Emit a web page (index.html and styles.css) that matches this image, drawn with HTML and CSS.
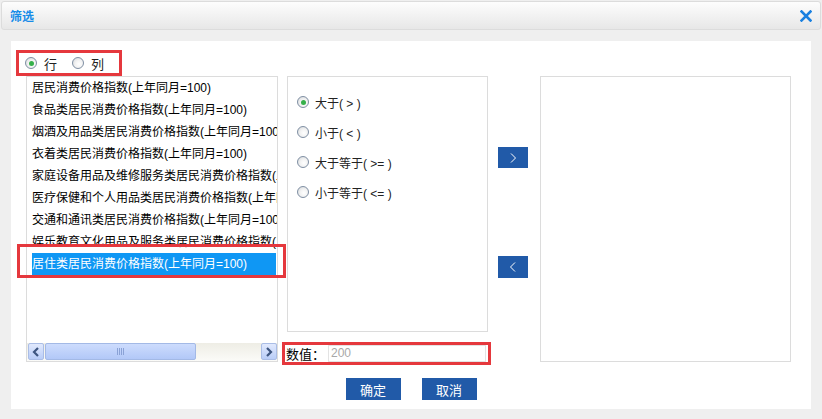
FILE: index.html
```html
<!DOCTYPE html>
<html lang="zh-CN">
<head>
<meta charset="utf-8">
<title>筛选</title>
<link rel="stylesheet" href="styles.css">
</head>
<body>
<div class="dialog">
  <div class="header">
    <span class="title">筛选</span>
    <svg class="close" width="12" height="12" viewBox="0 0 12 12"><path d="M1.5 1.5 L10.5 10.5 M10.5 1.5 L1.5 10.5" stroke="#1a80e0" stroke-width="2.6" stroke-linecap="square"/></svg>
  </div>
  <div class="panel">
    <div class="main">
      <div class="left">
        <div class="axis">
          <label class="opt"><span class="radio on"></span>行</label>
          <label class="opt"><span class="radio"></span>列</label>
        </div>
        <div class="list">
          <div class="items">
            <div class="item">居民消费价格指数(上年同月=100)</div>
            <div class="item">食品类居民消费价格指数(上年同月=100)</div>
            <div class="item">烟酒及用品类居民消费价格指数(上年同月=100)</div>
            <div class="item">衣着类居民消费价格指数(上年同月=100)</div>
            <div class="item">家庭设备用品及维修服务类居民消费价格指数(上年同月=100)</div>
            <div class="item">医疗保健和个人用品类居民消费价格指数(上年同月=100)</div>
            <div class="item">交通和通讯类居民消费价格指数(上年同月=100)</div>
            <div class="item">娱乐教育文化用品及服务类居民消费价格指数(上年同月=100)</div>
            <div class="item sel">居住类居民消费价格指数(上年同月=100)</div>
          </div>
          <div class="hscroll">
            <span class="sbtn"><svg width="8" height="10" viewBox="0 0 8 10"><path d="M6 1 L2 5 L6 9" fill="none" stroke="#3d5580" stroke-width="2.2"/></svg></span>
            <span class="thumb"><span class="grip"></span></span>
            <span class="spacer"></span>
            <span class="sbtn"><svg width="8" height="10" viewBox="0 0 8 10"><path d="M2 1 L6 5 L2 9" fill="none" stroke="#3d5580" stroke-width="2.2"/></svg></span>
          </div>
        </div>
        <div class="mark"></div>
      </div>
      <div class="mid">
        <div class="ops">
          <label class="op"><span class="radio on"></span>大于( &gt; )</label>
          <label class="op"><span class="radio"></span>小于( &lt; )</label>
          <label class="op"><span class="radio"></span>大于等于( &gt;= )</label>
          <label class="op"><span class="radio"></span>小于等于( &lt;= )</label>
        </div>
        <div class="value">
          <span class="vlabel">数值：</span>
          <span class="vinput">200</span>
        </div>
      </div>
      <div class="move">
        <span class="mbtn add"><svg width="8" height="12" viewBox="0 0 8 12"><path d="M2 1.5 L6.5 6 L2 10.5" fill="none" stroke="#fff" stroke-width="1"/></svg></span>
        <span class="mbtn remove"><svg width="8" height="12" viewBox="0 0 8 12"><path d="M6 1.5 L1.5 6 L6 10.5" fill="none" stroke="#fff" stroke-width="1"/></svg></span>
      </div>
      <div class="target"></div>
    </div>
    <div class="footer">
      <span class="btn">确定</span>
      <span class="btn">取消</span>
    </div>
  </div>
</div>
</body>
</html>
```
FILE: styles.css
```css
html, body {
  margin: 0;
  padding: 0;
}
body {
  width: 822px;
  height: 419px;
  overflow: hidden;
  background: #efefef;
  font-family: "Liberation Sans", "Noto Sans CJK SC", sans-serif;
  font-size: 12px;
  color: #000;
}
.dialog {
  padding: 1px 1px 0 1px;
}
.header {
  box-sizing: border-box;
  height: 29px;
  border: 1px solid #dcdcdc;
  border-radius: 3px;
  background: linear-gradient(#fdfdfd, #e7e7e7);
  display: flex;
  align-items: center;
  justify-content: space-between;
  padding: 0 8px 0 8px;
}
.title {
  color: #168be8;
  font-weight: bold;
  font-size: 12px;
}
.close {
  display: block;
  margin-top: 1px;
}
.panel {
  box-sizing: border-box;
  margin: 11px 10px 0 10px;
  height: 368px;
  background: #fff;
}
.main {
  display: flex;
  align-items: flex-start;
  padding: 9px 0 0 5px;
}
.left {
  position: relative;
  width: 266px;
  flex: none;
}
.axis {
  box-sizing: border-box;
  width: 106px;
  height: 26px;
  border: 3px solid #e5383d;
  display: flex;
  align-items: center;
  padding-left: 6px;
  gap: 15px;
}
.opt {
  display: flex;
  align-items: center;
  gap: 7px;
  font-size: 13px;
  color: #222;
}
.radio {
  box-sizing: border-box;
  width: 12px;
  height: 12px;
  border-radius: 50%;
  border: 1px solid #7f8fa3;
  background: radial-gradient(circle at 60% 60%, #ffffff 0%, #f2f2f2 45%, #cfd3d8 100%);
  display: flex;
  align-items: center;
  justify-content: center;
  flex: none;
}
.radio.on::after {
  content: "";
  width: 5px;
  height: 5px;
  border-radius: 50%;
  background: #36b04a;
}
.list {
  box-sizing: border-box;
  margin-left: 10px;
  width: 252px;
  height: 286px;
  border: 1px solid #dcdcdc;
  display: flex;
  flex-direction: column;
}
.items {
  flex: 1;
  overflow: hidden;
  padding-left: 5px;
}
.item {
  height: 22px;
  line-height: 22px;
  white-space: nowrap;
}
.item.sel {
  background: #0f97f4;
  color: #fff;
  margin-right: 1px;
}
.hscroll {
  height: 17px;
  display: flex;
  align-items: stretch;
  padding: 0 0 1px 1px;
  background: linear-gradient(#eeede5, #fbfbf8);
}
.sbtn {
  box-sizing: border-box;
  width: 16px;
  border: 1px solid #aabde6;
  border-radius: 2px;
  background: linear-gradient(#e1e9fd, #b9cdf8);
  display: flex;
  align-items: center;
  justify-content: center;
  flex: none;
}
.thumb {
  box-sizing: border-box;
  margin-left: 1px;
  width: 151px;
  border: 1px solid #a3b9e6;
  border-radius: 2px;
  background: linear-gradient(#cddcfd, #b2c8f8);
  display: flex;
  align-items: center;
  justify-content: center;
}
.grip {
  width: 7px;
  height: 7px;
  background: repeating-linear-gradient(90deg, #8aa2d6 0, #8aa2d6 1px, transparent 1px, transparent 2px);
}
.spacer {
  flex: 1;
}
.mark {
  position: absolute;
  left: 1px;
  top: 194px;
  width: 269px;
  height: 34px;
  box-sizing: border-box;
  border: 3px solid #e5383d;
}
.mid {
  width: 209px;
  flex: none;
}
.ops {
  box-sizing: border-box;
  margin: 26px 0 0 5px;
  width: 201px;
  height: 256px;
  border: 1px solid #dcdcdc;
  padding: 10px 0 0 9px;
}
.op {
  height: 30px;
  display: flex;
  align-items: center;
  gap: 6px;
  color: #222;
  font-size: 12px;
}
.value {
  box-sizing: border-box;
  margin-top: 10px;
  width: 209px;
  height: 23px;
  border: 3px solid #e5383d;
  display: flex;
  align-items: center;
  padding-left: 1px;
}
.vlabel {
  font-size: 13px;
  width: 42px;
  flex: none;
}
.vinput {
  box-sizing: border-box;
  width: 158px;
  height: 17px;
  border: 1px solid #e3e3e3;
  color: #a8a8a8;
  font-size: 12px;
  line-height: 15px;
  padding-left: 2px;
}
.move {
  margin-left: 7px;
  width: 30px;
  flex: none;
  display: flex;
  flex-direction: column;
}
.mbtn {
  background: #215aa8;
  display: flex;
  align-items: center;
  justify-content: center;
}
.mbtn.add {
  margin-top: 97px;
  height: 21px;
}
.mbtn.remove {
  margin-top: 88px;
  height: 22px;
}
.target {
  box-sizing: border-box;
  margin: 26px 0 0 12px;
  width: 251px;
  height: 286px;
  border: 1px solid #dcdcdc;
  flex: none;
}
.footer {
  margin-top: 13px;
  display: flex;
  justify-content: center;
  gap: 21px;
}
.btn {
  width: 55px;
  height: 22px;
  background: #215aa8;
  color: #fff;
  font-size: 13px;
  display: flex;
  align-items: center;
  justify-content: center;
}
```
